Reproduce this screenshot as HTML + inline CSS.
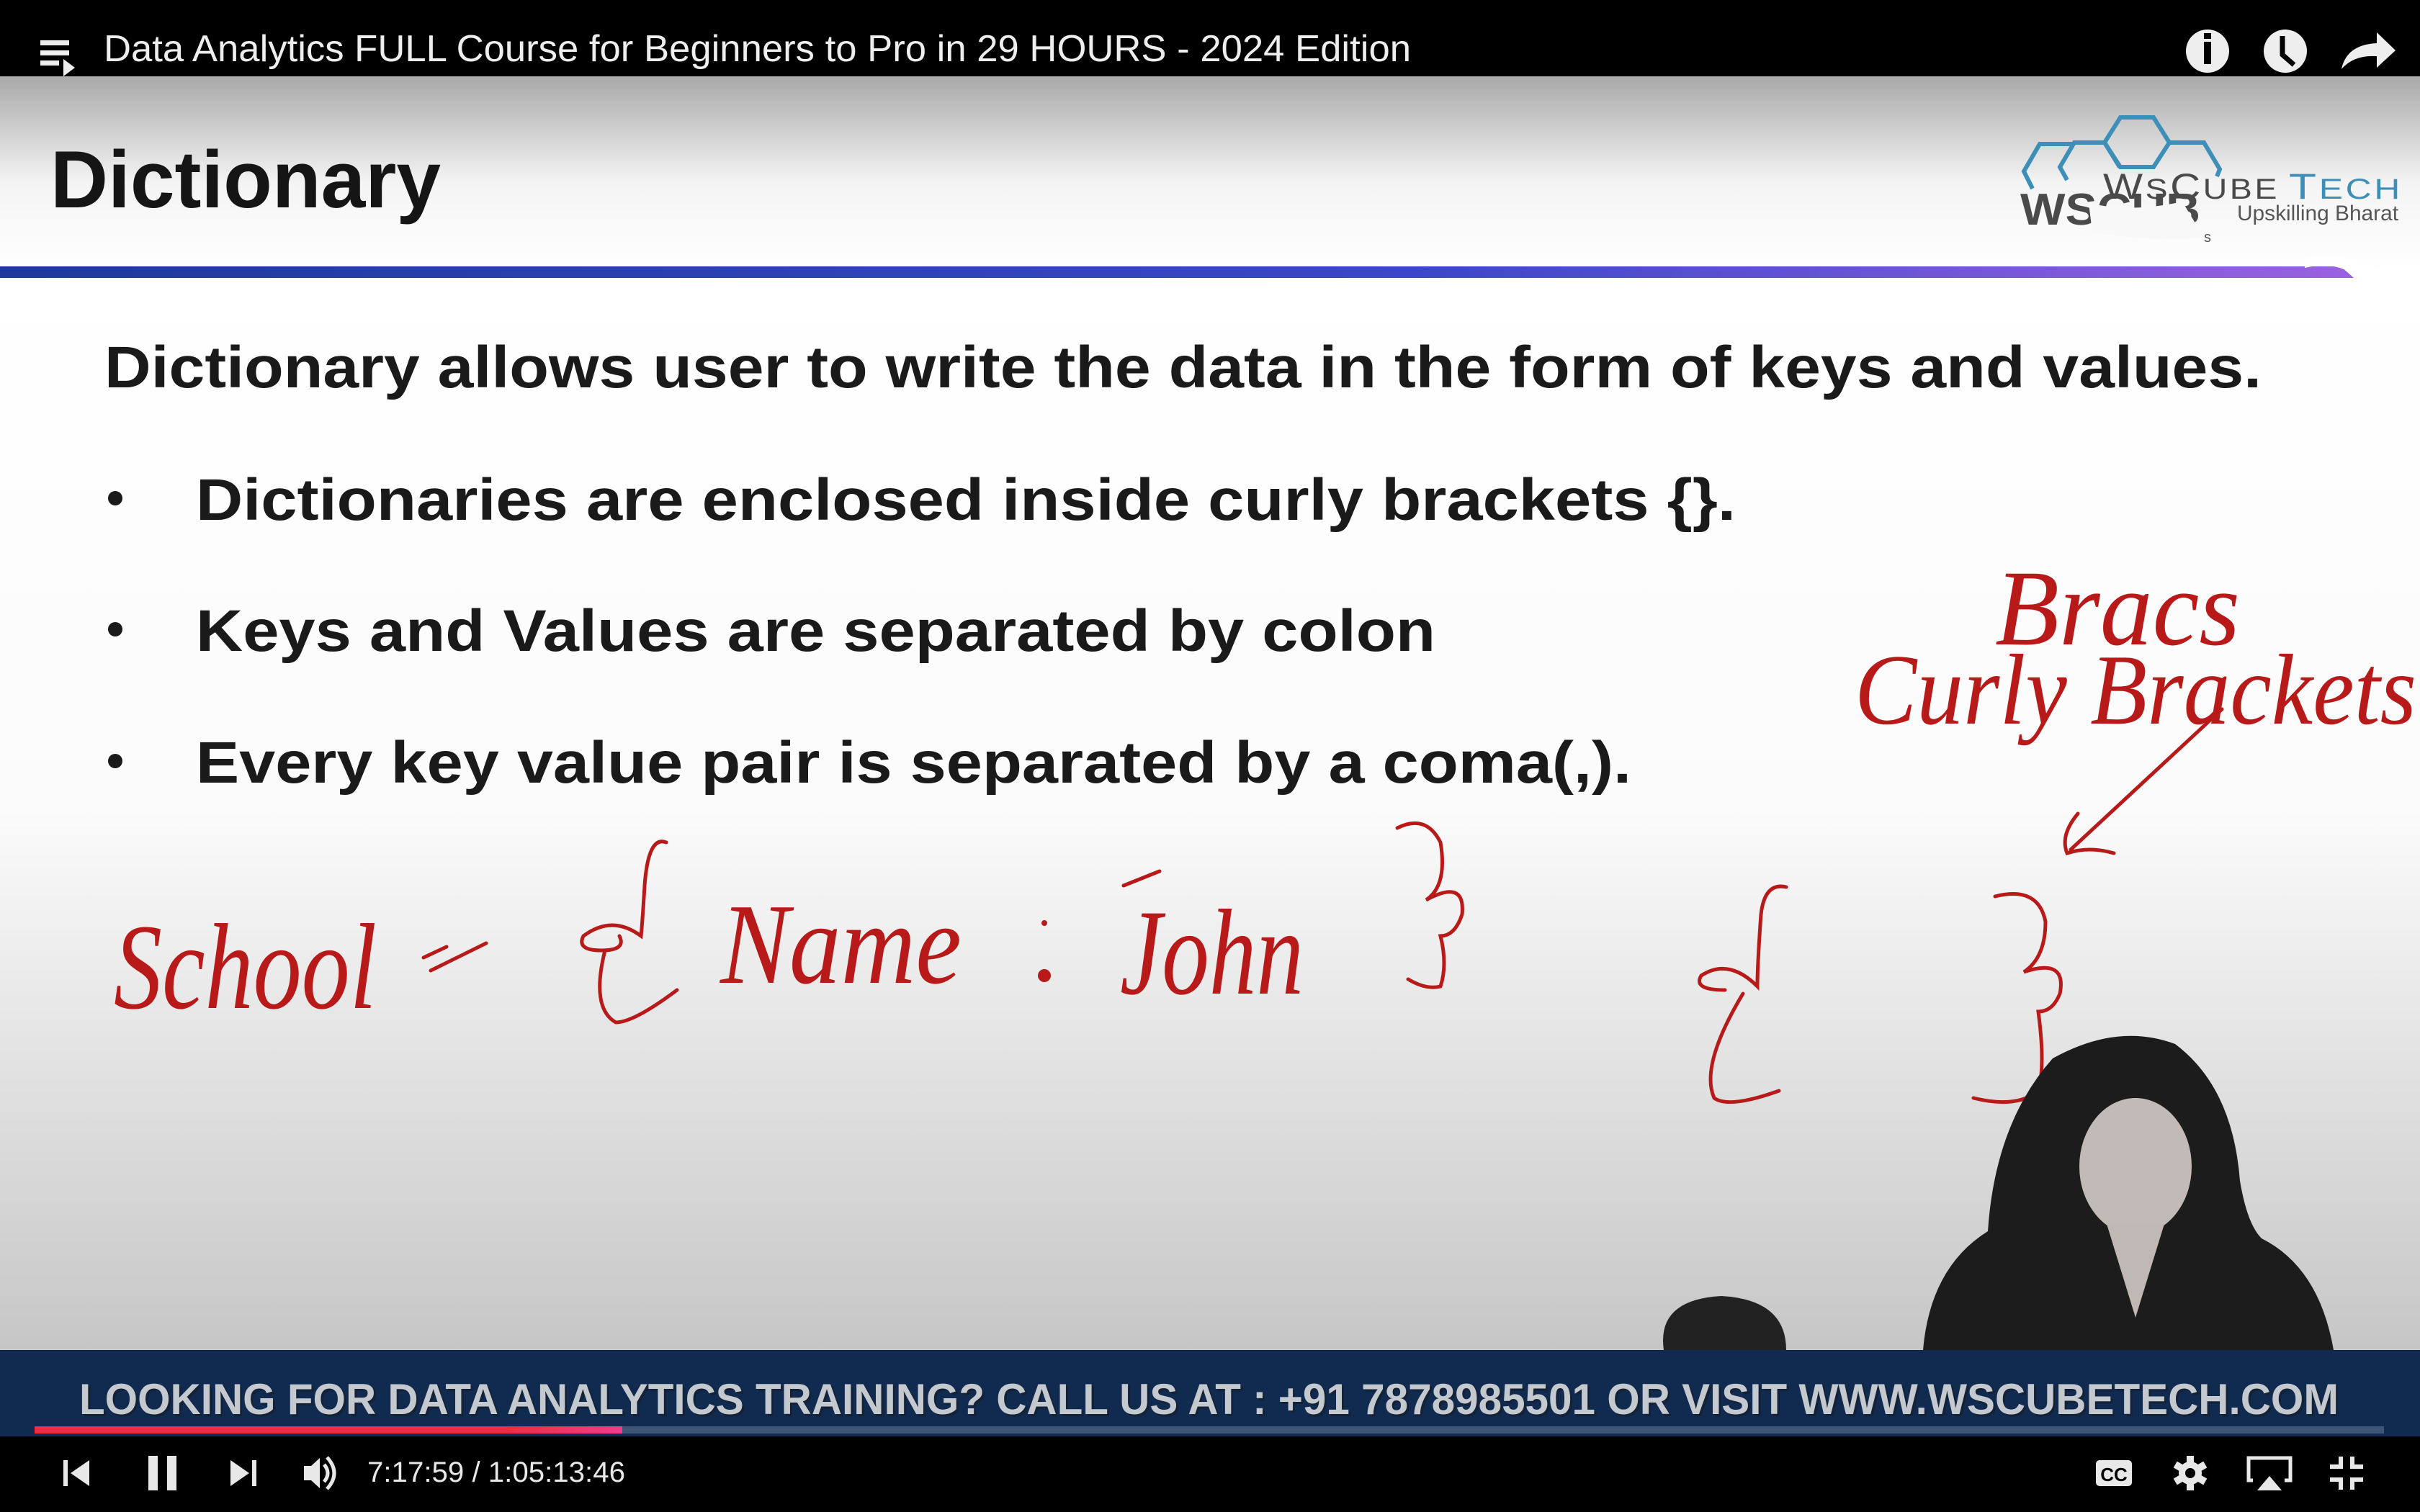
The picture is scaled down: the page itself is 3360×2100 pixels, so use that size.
<!DOCTYPE html>
<html><head><meta charset="utf-8"><style>
html,body{margin:0;padding:0;width:3360px;height:2100px;overflow:hidden;background:#000}
svg{display:block}
</style></head><body>
<svg width="3360" height="2100" viewBox="0 0 3360 2100" xmlns="http://www.w3.org/2000/svg">
<defs>
<linearGradient id="hdr" x1="0" y1="0" x2="0" y2="1">
<stop offset="0" stop-color="#a9a9a9"/><stop offset="0.55" stop-color="#f4f4f4"/><stop offset="1" stop-color="#ffffff"/></linearGradient>
<linearGradient id="body" x1="0" y1="0" x2="0" y2="1">
<stop offset="0" stop-color="#ffffff"/><stop offset="0.5" stop-color="#fbfbfb"/><stop offset="1" stop-color="#c6c6c6"/></linearGradient>
<linearGradient id="bl" x1="0" y1="0" x2="1" y2="0">
<stop offset="0" stop-color="#1e3a9c"/><stop offset="0.6" stop-color="#3a47c8"/><stop offset="1" stop-color="#9a62e0"/></linearGradient>
<linearGradient id="prog" x1="0" y1="0" x2="1" y2="0">
<stop offset="0.8" stop-color="#e8303f"/><stop offset="1" stop-color="#e8408a"/></linearGradient>
</defs>
<rect x="0" y="0" width="3360" height="106" fill="#000"/>
<rect x="0" y="106" width="3360" height="270" fill="url(#hdr)"/>
<rect x="0" y="376" width="3360" height="1500" fill="url(#body)"/>
<path d="M0 370 H3250 L3268 386 H0 Z" fill="url(#bl)"/>
<path d="M3200 360 Q3260 345 3290 380 Q3320 410 3360 405 V420 Q3300 420 3280 392 Q3250 360 3200 372 Z" fill="#fff"/>

<g fill="#eee">
<rect x="56" y="56" width="40" height="7"/><rect x="56" y="70" width="40" height="7"/><rect x="56" y="84" width="26" height="7"/>
<path d="M88 82 L104 94 L88 106 Z"/>
</g>
<text x="144" y="85" font-family="Liberation Sans, sans-serif" font-size="52" fill="#eee" textLength="1815" lengthAdjust="spacingAndGlyphs">Data Analytics FULL Course for Beginners to Pro in 29 HOURS - 2024 Edition</text>
<circle cx="3065" cy="71" r="30" fill="#eee"/><rect x="3060" y="58" width="10" height="31" fill="#000"/><rect x="3060" y="46" width="10" height="8" fill="#000"/>
<circle cx="3173" cy="71" r="30" fill="#eee"/><path d="M3169 50 V76 L3185 90" stroke="#000" stroke-width="7" fill="none"/>
<path d="M3251 96 Q3258 62 3300 60 V45 L3326 70 L3300 94 V78 Q3268 76 3251 96 Z" fill="#eee"/>

<g stroke="#3d8fb8" stroke-width="6" fill="none">
<path d="M2878 200 H2832 L2810 238 L2822 262"/>
<path d="M2870 250 L2860 232 L2880 198 H2922 L2943 232"/>
<path d="M2922 198 L2944 163 H2990 L3012 198 L2990 232 H2944 L2922 198"/>
<path d="M3012 198 H3060 L3082 235 L3078 245"/>
</g>
<text x="2805" y="312" font-family="Liberation Sans, sans-serif" font-size="62" font-weight="bold" fill="#4a4a4a" textLength="250" lengthAdjust="spacingAndGlyphs">WSCUB</text>
<path d="M2900 282 Q2960 296 3030 280 L3060 330 Q2980 336 2905 322 Z" fill="#f8f8f8"/>
<text x="3060" y="336" font-family="Liberation Sans, sans-serif" font-size="20" fill="#555">s</text>
<text x="2920" y="276" font-family="Liberation Sans, sans-serif" font-size="50" fill="#4a4a4a" letter-spacing="3" textLength="245" lengthAdjust="spacingAndGlyphs">W<tspan font-size="40">S</tspan>C<tspan font-size="40">UBE</tspan></text>
<text x="3178" y="276" font-family="Liberation Sans, sans-serif" font-size="50" fill="#3d8fb8" letter-spacing="3" textLength="158" lengthAdjust="spacingAndGlyphs">T<tspan font-size="40">ECH</tspan></text>
<text x="3106" y="306" font-family="Liberation Sans, sans-serif" font-size="30" fill="#555" textLength="224" lengthAdjust="spacingAndGlyphs">Upskilling Bharat</text>

<text x="70" y="288" font-family="Liberation Sans, sans-serif" font-size="112" font-weight="bold" fill="#151515" textLength="542" lengthAdjust="spacingAndGlyphs">Dictionary</text>
<g font-family="Liberation Sans, sans-serif" font-weight="bold" fill="#1a1a1a" font-size="82">
<text x="145" y="538" textLength="2995" lengthAdjust="spacingAndGlyphs">Dictionary allows user to write the data in the form of keys and values.</text>
<text x="272" y="722" textLength="2138" lengthAdjust="spacingAndGlyphs">Dictionaries are enclosed inside curly brackets {}.</text>
<text x="272" y="904" textLength="1721" lengthAdjust="spacingAndGlyphs">Keys and Values are separated by colon</text>
<text x="272" y="1087" textLength="1993" lengthAdjust="spacingAndGlyphs">Every key value pair is separated by a coma(,).</text>
</g>
<circle cx="160" cy="692" r="10" fill="#1a1a1a"/><circle cx="160" cy="874" r="10" fill="#1a1a1a"/><circle cx="160" cy="1057" r="10" fill="#1a1a1a"/>

<g fill="none" stroke="#b81a1a" stroke-width="5" stroke-linecap="round">
<path d="M925 1170 Q900 1160 895 1230 Q892 1280 890 1300 Q850 1270 810 1300 Q800 1320 835 1320 Q870 1320 860 1300 M840 1320 Q820 1400 855 1420 Q880 1420 940 1375"/>
<path d="M1940 1150 Q1980 1130 2000 1170 Q2010 1230 1980 1250 Q2035 1220 2030 1270 Q2020 1300 2000 1300 Q2010 1340 2000 1370 Q1980 1375 1955 1360"/>
<path d="M2480 1232 Q2450 1225 2445 1270 Q2440 1340 2440 1370 Q2400 1330 2362 1355 Q2350 1375 2395 1375 M2420 1380 Q2360 1480 2380 1525 Q2400 1540 2470 1515"/>
<path d="M2770 1245 Q2830 1230 2840 1280 Q2840 1330 2810 1350 Q2870 1330 2860 1380 Q2850 1405 2830 1405 Q2840 1480 2830 1515 Q2800 1540 2740 1525"/>
<path d="M588 1330 L620 1315 M598 1348 L675 1310"/>
<path d="M1560 1230 L1610 1210"/>
<path d="M3085 985 L2875 1180 M2885 1130 Q2860 1160 2870 1185 Q2900 1175 2935 1185"/>
</g>
<circle cx="1450" cy="1355" r="9" fill="#b81a1a"/><circle cx="1450" cy="1282" r="4" fill="#b81a1a"/>
<g font-family="Liberation Serif, serif" font-style="italic" fill="#b81a1a">
<text x="158" y="1400" font-size="170" textLength="365" lengthAdjust="spacingAndGlyphs">School</text>
<text x="1000" y="1365" font-size="160" textLength="335" lengthAdjust="spacingAndGlyphs">Name</text>
<text x="1555" y="1380" font-size="170" textLength="255" lengthAdjust="spacingAndGlyphs">John</text>
<text x="2770" y="895" font-size="150" textLength="340" lengthAdjust="spacingAndGlyphs">Bracs</text>
<text x="2575" y="1005" font-size="140" textLength="780" lengthAdjust="spacingAndGlyphs">Curly Brackets</text>
</g>

<path d="M2310 1875 Q2300 1805 2390 1800 Q2480 1805 2480 1875 Z" fill="#222"/>
<path d="M2670 1875 Q2680 1760 2760 1710 Q2770 1560 2850 1470 Q2940 1420 3020 1450 Q3100 1510 3110 1640 Q3120 1700 3140 1720 Q3220 1760 3240 1875 Z" fill="#1c1c1c"/>
<ellipse cx="2965" cy="1620" rx="78" ry="95" fill="#c2bab6"/>
<path d="M2925 1700 L2965 1830 L3005 1700 Z" fill="#c0b8b4"/>

<rect x="0" y="1875" width="3360" height="120" fill="#102a50"/>
<text x="113" y="1967" font-family="Liberation Sans, sans-serif" font-size="60" font-weight="bold" fill="#1a1a1a" textLength="3137" lengthAdjust="spacingAndGlyphs" opacity="0.5">LOOKING FOR DATA ANALYTICS TRAINING? CALL US AT : +91 7878985501 OR VISIT WWW.WSCUBETECH.COM</text>
<text x="110" y="1964" font-family="Liberation Sans, sans-serif" font-size="60" font-weight="bold" fill="#c4c9cf" textLength="3137" lengthAdjust="spacingAndGlyphs">LOOKING FOR DATA ANALYTICS TRAINING? CALL US AT : +91 7878985501 OR VISIT WWW.WSCUBETECH.COM</text>
<rect x="48" y="1981" width="3262" height="10" fill="#3f5576"/>
<rect x="48" y="1981" width="816" height="10" fill="url(#prog)"/>

<rect x="0" y="1995" width="3360" height="105" fill="#000"/>
<g fill="#e8e8e8">
<rect x="88" y="2028" width="6" height="36"/><path d="M124 2028 V2064 L98 2046 Z"/>
<rect x="206" y="2022" width="13" height="48"/><rect x="232" y="2022" width="13" height="48"/>
<path d="M320 2028 V2064 L346 2046 Z"/><rect x="350" y="2028" width="6" height="36"/>
<path d="M422 2036 H432 L444 2025 V2067 L432 2056 H422 Z"/>
</g>
<path d="M450 2034 Q460 2046 450 2058 M454 2024 Q474 2046 454 2068" stroke="#e8e8e8" stroke-width="5" fill="none"/>
<text x="510" y="2058" font-family="Liberation Sans, sans-serif" font-size="40" fill="#e8e8e8" textLength="358" lengthAdjust="spacingAndGlyphs">7:17:59 / 1:05:13:46</text>
<rect x="2910" y="2028" width="50" height="36" rx="5" fill="#e8e8e8"/>
<text x="2935" y="2057" text-anchor="middle" font-family="Liberation Sans, sans-serif" font-size="26" font-weight="bold" fill="#000">CC</text>
<g transform="translate(3041 2046)" fill="#e8e8e8">
<circle r="16"/>
<g><rect x="-5" y="-24" width="10" height="48"/><rect x="-5" y="-24" width="10" height="48" transform="rotate(60)"/><rect x="-5" y="-24" width="10" height="48" transform="rotate(120)"/></g>
<circle r="7" fill="#000"/>
</g>
<path d="M3128 2056 H3122 V2025 H3180 V2056 H3172" stroke="#e8e8e8" stroke-width="5" fill="none"/>
<path d="M3134 2070 L3151 2050 L3168 2070 Z" fill="#e8e8e8"/>
<g stroke="#e8e8e8" stroke-width="6" fill="none">
<path d="M3235 2037 H3250 V2023 M3266 2023 V2037 H3281 M3235 2055 H3250 V2069 M3266 2069 V2055 H3281"/>
</g>
</svg>
</body></html>
